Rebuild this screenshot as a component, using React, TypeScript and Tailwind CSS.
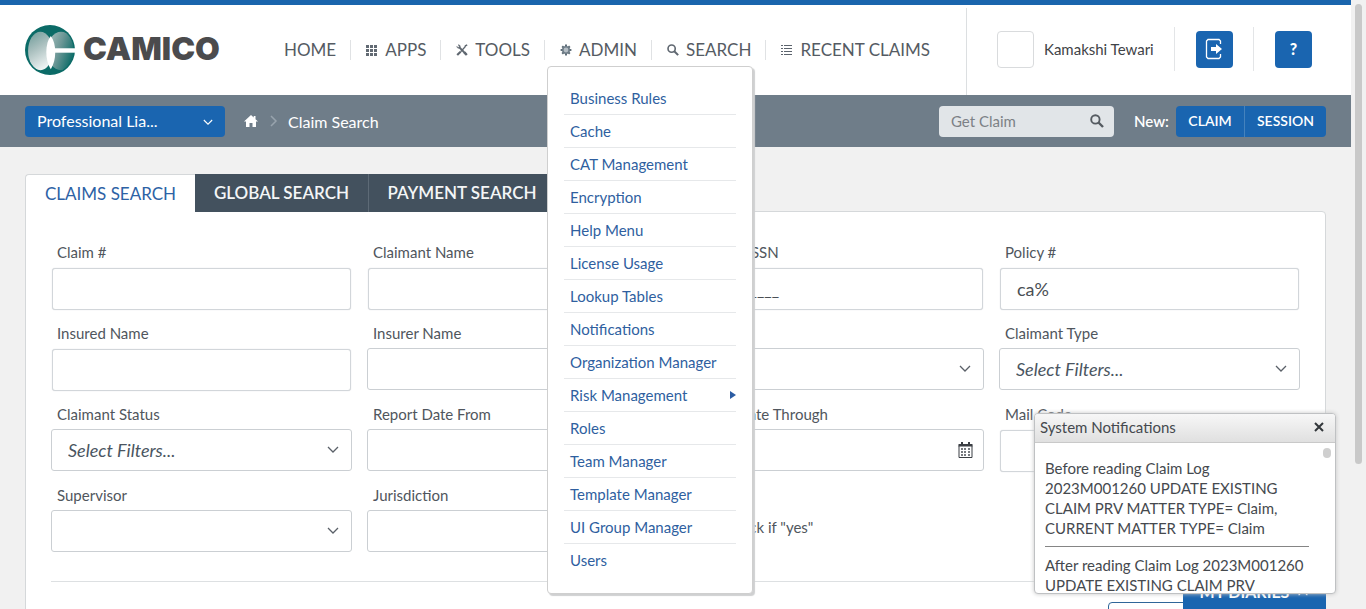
import React, { useId, useState } from "react";

const lato = "font-['Lato','Noto_Sans',sans-serif]";

/* ---------- icons ---------- */

function LogoMark() {
  return (
    <svg viewBox="0 0 52 52" className="h-[50px] w-[50px] shrink-0" aria-hidden="true">
      <defs>
        <linearGradient id="lensLeft" x1="0.1" y1="0" x2="0.5" y2="1">
          <stop offset="0" stopColor="#6f9c9a" />
          <stop offset="0.45" stopColor="#a9bfbe" />
          <stop offset="1" stopColor="#eef3f3" />
        </linearGradient>
        <linearGradient id="lensRight" x1="0.1" y1="0" x2="1" y2="0.4">
          <stop offset="0" stopColor="#a4bdbc" />
          <stop offset="0.5" stopColor="#6c9796" />
          <stop offset="1" stopColor="#15706c" />
        </linearGradient>
        <clipPath id="disc">
          <circle cx="26" cy="26" r="24.500" />
        </clipPath>
      </defs>
      <circle cx="26" cy="26" r="26" fill="#0b6b67" />
      <g clipPath="url(#disc)">
        <ellipse cx="37.500" cy="27" rx="14.500" ry="20" fill="url(#lensRight)" />
        <ellipse cx="16" cy="27" rx="12.800" ry="20" fill="url(#lensLeft)" />
      </g>
      <path d="M26.800 11.500C33 19 33 37 26.800 46C20.600 37 20.600 19 26.800 11.500Z" fill="#fff" />
      <path d="M29 24.200H52V28.800H29Z" fill="#fff" />
    </svg>
  );
}

function GridIcon() {
  return (
    <svg viewBox="0 0 12 12" className="h-3 w-3 fill-[#626a73]" aria-hidden="true">
      <path d="M0 1h3v3H0zM4 1h3v3H4zM8 1h3v3H8zM0 5h3v3H0zM4 5h3v3H4zM8 5h3v3H8zM0 9h3v3H0zM4 9h3v3H4zM8 9h3v3H8z" />
    </svg>
  );
}

function ToolsIcon() {
  return (
    <svg viewBox="0 0 12 12" className="h-3 w-3" fill="none" stroke="#5f6770" aria-hidden="true">
      <path d="M3 3l6.800 7" strokeWidth="1.800" />
      <path d="M.8 2.200l1.200 1.200h1.200V2L2 .9c1.300-.4 2.600.7 2.300 2L3.200 4.300C2 4.600.7 3.600.8 2.200z" fill="#656d76" strokeWidth=".4" />
      <path d="M1.200 11l3.400-3.200" strokeWidth="2.200" />
      <path d="M4.600 7.800L9 3l.4-1.200L11.200.8" strokeWidth="1.400" />
      <path d="M8.400 8.400l2.400 2.600" strokeWidth="2.400" />
    </svg>
  );
}

function GearIcon() {
  return (
    <svg viewBox="0 0 12 12" className="h-3 w-3" aria-hidden="true">
      <g stroke="#5f6d78" strokeWidth="2">
        <path d="M6 .6v10.800M.6 6h10.800M2.200 2.200l7.600 7.600M9.800 2.200L2.200 9.800" />
      </g>
      <circle cx="6" cy="6" r="3.200" fill="#b4bdc4" stroke="#6f7d88" strokeWidth="1.600" />
    </svg>
  );
}

function SearchIcon({ className }: { className: string }) {
  return (
    <svg viewBox="0 0 14 14" className={className} fill="none" stroke="currentColor" aria-hidden="true">
      <circle cx="5.400" cy="5.400" r="4.200" strokeWidth="1.900" />
      <path d="M8.500 8.500l4.500 4.500" strokeWidth="2.400" />
    </svg>
  );
}

function ListIcon() {
  return (
    <svg viewBox="0 0 12 12" className="h-3 w-3 fill-[#5c646d]" aria-hidden="true">
      <path d="M0 1h2v1H0zM3 1h8v1H3zM0 4h2v1H0zM3 4h8v1H3zM0 7h2v1H0zM3 7h8v1H3zM0 10h2v1H0zM3 10h8v1H3z" />
    </svg>
  );
}

function ExitIcon() {
  return (
    <svg viewBox="0 0 18 22" className="h-[22px] w-[18px]" fill="none" stroke="#fff" aria-hidden="true">
      <path d="M15.500 6V3L14 1.500H3L1.500 3V19L3 20.500H14L15.500 19V16" strokeWidth="1.300" />
      <path d="M6 9h5V6l6 5-6 5v-3H6z" fill="#fff" stroke="none" />
    </svg>
  );
}

function HomeIcon() {
  return (
    <svg viewBox="0 0 14 12" className="h-3 w-[14px] fill-white" aria-hidden="true">
      <path d="M7 0L0 6.600h2V12h3.500V8h3v4H12V6.600h2L11.500 4.300V1H9.700v1.600z" />
    </svg>
  );
}

function Chevron({ className }: { className: string }) {
  return (
    <svg viewBox="0 0 12 8" className={className} fill="none" stroke="currentColor" strokeWidth="1.300" aria-hidden="true">
      <path d="M1 1l5 5 5-5" />
    </svg>
  );
}

function CalendarIcon() {
  return (
    <svg viewBox="0 0 15 16" className="h-4 w-[15px]" aria-hidden="true">
      <path d="M1 3.500h13V15.500H1z" fill="none" stroke="#3b3f44" />
      <path d="M.5 2h14v2.500H.5z" fill="#3b3f44" />
      <path d="M3 0h2v3H3zM10 0h2v3h-2z" fill="#3b3f44" />
      <path d="M3 6h2v2H3zM6 6h2v2H6zM10 6h2v2h-2zM3 9h2v2H3zM6 9h2v2H6zM10 9h2v2h-2zM3 12h2v2H3zM6 12h2v2H6zM10 12h2v2h-2z" fill="#777b80" />
    </svg>
  );
}

/* ---------- form fields ---------- */

const labelClass = "block h-5 pl-[6px] text-[15px] leading-[18px] text-[#50565d]";

function TextField({ label, value = "", size = "text-lg" }: { label: string; value?: string; size?: string }) {
  const id = useId();
  const [text, setText] = useState(value);
  return (
    <div>
      <label htmlFor={id} className={labelClass}>{label}</label>
      <div className="px-px pt-[5px]">
        <input
          id={id}
          value={text}
          onChange={(e) => setText(e.target.value)}
          className={`${size} block h-[42px] w-full rounded-[3px] border border-[#d2d6da] bg-white px-4 text-[#4a4f55] shadow-[0_0_1px_#c8ccd0] outline-none`}
        />
      </div>
    </div>
  );
}

function SelectField({ label, placeholder = "" }: { label: string; placeholder?: string }) {
  const id = useId();
  return (
    <div>
      <label htmlFor={id} className={labelClass}>{label}</label>
      <div className="relative mt-1">
        <select
          id={id}
          className="block h-[42px] w-full appearance-none rounded-[3px] border border-[#cbcfd3] bg-white px-4 text-lg text-[#4a5561] italic outline-none"
        >
          <option>{placeholder}</option>
        </select>
        <Chevron className="pointer-events-none absolute top-[17px] right-[13px] h-2 w-3 text-[#5a6068]" />
      </div>
    </div>
  );
}

function DateField({ label }: { label: string }) {
  const id = useId();
  return (
    <div>
      <label htmlFor={id} className={labelClass}>{label}</label>
      <div className="mt-1 flex h-[42px] items-center rounded-[3px] border border-[#cbcfd3] bg-white pr-[10px]">
        <input id={id} className="h-full min-w-0 flex-1 px-4 text-lg text-[#4a4f55] outline-none" />
        <button type="button" aria-label={`Pick a date: ${label}`}><CalendarIcon /></button>
      </div>
    </div>
  );
}

/* ---------- header ---------- */

const adminItems = [
  "Business Rules", "Cache", "CAT Management", "Encryption", "Help Menu",
  "License Usage", "Lookup Tables", "Notifications", "Organization Manager",
  "Risk Management", "Roles", "Team Manager", "Template Manager",
  "UI Group Manager", "Users",
];

function AdminMenu() {
  return (
    <ul className="absolute top-[26px] left-[2px] z-20 w-[206px] rounded-[4px] border border-[#cfcfcf] bg-white px-4 pt-[15px] pb-[17px] shadow-[2px_2px_1px_#cfd0d1]">
      {adminItems.map((item) => (
        <li key={item} className="border-b border-[#e6e8ea] last:border-b-0">
          <a href="#" className="flex h-8 items-center justify-between pl-[6px] text-[15px] whitespace-nowrap text-[#2f5f9f]">
            {item}
            {item === "Risk Management" && (
              <svg viewBox="0 0 6 8" className="h-2 w-[6px] fill-[#2b5ca3]" aria-hidden="true"><path d="M0 0l6 4-6 4z" /></svg>
            )}
          </a>
        </li>
      ))}
    </ul>
  );
}

function NavItem({ icon, label, children }: { icon?: React.ReactNode; label: string; children?: React.ReactNode }) {
  return (
    <li className="relative border-r border-[#e0e2e4] pr-[14px] pl-[15px] last:border-r-0">
      <a href="#" className="flex h-5 items-center gap-[7px] text-[17px] whitespace-nowrap text-[#555b63]">
        {icon}
        {label}
      </a>
      {children}
    </li>
  );
}

function Header() {
  return (
    <header className="flex h-[95px] border-t-5 border-[#1a65ad] bg-white">
      <div className="flex min-w-0 flex-1 items-center pl-[25px]">
        <a href="#" className="flex w-[244px] items-center gap-2 pb-px">
          <LogoMark />
          <span className="pb-[2px] font-['Inter',sans-serif] text-[32px] leading-8 font-black text-[#4b4b4d]">CAMICO</span>
        </a>
        <nav>
          <ul className="flex items-center">
            <NavItem label="HOME" />
            <NavItem icon={<GridIcon />} label="APPS" />
            <NavItem icon={<ToolsIcon />} label="TOOLS" />
            <NavItem icon={<GearIcon />} label="ADMIN"><AdminMenu /></NavItem>
            <NavItem icon={<SearchIcon className="h-3 w-3 text-[#5f6770]" />} label="SEARCH" />
            <NavItem icon={<ListIcon />} label="RECENT CLAIMS" />
          </ul>
        </nav>
      </div>
      <div className="mt-[3px] flex w-[385px] shrink-0 items-center justify-between border-l border-[#dcdfe1] pr-[39px] pb-[5px] pl-[30px]">
        <div className="flex items-center gap-[10px]">
          <span className="h-[37px] w-[37px] rounded-[4px] border border-[#d9dbdd]" />
          <span className="text-[15px] text-[#3f4347]">Kamakshi Tewari</span>
        </div>
        <span className="h-11 w-px bg-[#e3e5e7]" />
        <button aria-label="Log out" className="flex h-[37px] w-[37px] items-center justify-center rounded-[4px] bg-[#1a65b0]"><ExitIcon /></button>
        <span className="h-11 w-px bg-[#e3e5e7]" />
        <button className="h-[37px] w-[37px] rounded-[4px] bg-[#1a65b0] text-base font-black text-white">?</button>
      </div>
    </header>
  );
}

function SubHeader() {
  return (
    <div className="flex h-[52px] items-center bg-[#6f7d89] px-[25px] text-base text-white">
      <div className="relative">
        <select aria-label="Program" className="h-[31px] w-[200px] appearance-none rounded-[4px] bg-[#1a65b0] pl-3 text-base text-white outline-none">
          <option>Professional Lia...</option>
        </select>
        <Chevron className="pointer-events-none absolute top-[13px] right-3 h-[7px] w-[10px]" />
      </div>
      <a href="#" aria-label="Home" className="ml-[19px]"><HomeIcon /></a>
      <svg viewBox="0 0 8 12" className="ml-3 h-3 w-2" fill="none" stroke="#98a3ad" strokeWidth="1.500" aria-hidden="true"><path d="M1 1l5 5-5 5" /></svg>
      <span className="ml-[10px] flex-1 pt-[2px]">Claim Search</span>
      <div className="flex h-[31px] w-[175px] items-center rounded-[4px] bg-[#e1e5e8] pr-[10px] pl-3">
        <input aria-label="Get Claim" placeholder="Get Claim" className="min-w-0 flex-1 text-[15px] outline-none placeholder:text-[#7c8186]" />
        <button aria-label="Find claim"><SearchIcon className="h-[14px] w-[14px] text-[#555b61]" /></button>
      </div>
      <span className="ml-5 w-[42px] text-[15px] font-semibold">New:</span>
      <div className="flex h-[31px] divide-x divide-[#4582bd] overflow-hidden rounded-[4px] bg-[#1a65b0] text-sm font-semibold">
        <button className="w-[69px]">CLAIM</button>
        <button className="w-[81px]">SESSION</button>
      </div>
    </div>
  );
}

/* ---------- search form ---------- */

function SearchPanel() {
  const checkId = useId();
  return (
    <main className="px-[25px] pt-[27px]">
      <div role="tablist" className="relative z-10 flex h-[38px] text-[17px]">
        <button role="tab" aria-selected="true" className="w-[170px] rounded-tl-[4px] border-t border-l border-[#d5d8da] bg-white text-[#2d62a5]">CLAIMS SEARCH</button>
        <button role="tab" aria-selected="false" className="w-[174px] border-r border-[#5d6a76] bg-[#43515e] font-semibold text-[#f4f6f7]">GLOBAL SEARCH</button>
        <button role="tab" aria-selected="false" className="w-[186px] bg-[#43515e] font-semibold text-[#f4f6f7]">PAYMENT SEARCH</button>
      </div>
      <form className="-mt-px rounded-tr-[4px] border border-[#d5d8da] bg-white px-[25px] pt-[31px] pb-10" onSubmit={(e) => e.preventDefault()}>
        <div className="grid auto-rows-[66px] grid-cols-4 gap-x-[15px] gap-y-[15px] border-b border-[#dde0e2] pb-[29px]">
          <TextField label="Claim #" />
          <TextField label="Claimant Name" />
          <TextField label="Claimant SSN" value="___-__-____" size="text-base" />
          <TextField label="Policy #" value="ca%" />
          <TextField label="Insured Name" />
          <SelectField label="Insurer Name" />
          <SelectField label="Status" />
          <SelectField label="Claimant Type" placeholder="Select Filters..." />
          <SelectField label="Claimant Status" placeholder="Select Filters..." />
          <DateField label="Report Date From" />
          <DateField label="Report Date Through" />
          <TextField label="Mail Code" />
          <SelectField label="Supervisor" />
          <SelectField label="Jurisdiction" />
          <div className="flex items-center gap-2 pt-4 pl-[19px] text-[15px] text-[#50565d]">
            <input id={checkId} type="checkbox" />
            <label htmlFor={checkId}>Check if &quot;yes&quot;</label>
          </div>
        </div>
        <div className="mt-5 flex justify-end gap-3">
          <button className="h-10 w-[90px] rounded-[4px] border border-[#2f6699] bg-white" aria-label="Clear" />
          <button className="h-10 w-[90px] rounded-[4px] bg-[#1a65b0]" aria-label="Search" />
        </div>
      </form>
    </main>
  );
}

function Notifications() {
  return (
    <section className="absolute right-[30px] bottom-[15px] z-30 flex h-[181px] w-[302px] flex-col overflow-hidden rounded-[4px] border border-[#bfc1c3] bg-white text-[15px] leading-5 text-[#45494e] shadow-[0_0_4px_#c4c4c4]">
      <header className="flex h-[29px] shrink-0 items-center justify-between border-b border-[#c9c9c9] bg-linear-to-b from-[#f7f7f7] to-[#e0e0e0] pr-[11px] pb-[2px] pl-[5px]">
        <h2>System Notifications</h2>
        <button aria-label="Close">
          <svg viewBox="0 0 10 10" className="h-[10px] w-[10px]" stroke="#33373b" strokeWidth="2" aria-hidden="true"><path d="M1 1l8 8M9 1L1 9" /></svg>
        </button>
      </header>
      <div className="flex min-h-0 flex-1 pt-[15px] pl-[10px]">
        <div className="w-[264px]">
          <p className="w-[240px]">Before reading Claim Log 2023M001260 UPDATE EXISTING CLAIM PRV MATTER TYPE= Claim, CURRENT MATTER TYPE= Claim</p>
          <hr className="mt-2 mb-2 border-[#858585]" />
          <p>After reading Claim Log 2023M001260 UPDATE EXISTING CLAIM PRV</p>
        </div>
        <span className="-mt-[10px] ml-[14px] h-[10px] w-2 rounded-full bg-[#cfcfcf]" />
      </div>
    </section>
  );
}

export default function App() {
  return (
    <div className={`${lato} relative flex h-screen overflow-hidden bg-[#f1f1f1]`}>
      <div className="min-w-0 flex-1">
        <Header />
        <SubHeader />
        <SearchPanel />
      </div>
      <div className="flex w-[15px] shrink-0 justify-center pt-1">
        <div className="h-[460px] w-[7px] rounded-full bg-[#c9c9c9]" />
      </div>
      <button className="absolute right-10 bottom-0 z-20 flex h-[34px] w-[143px] items-center justify-center gap-2 bg-[#1a65b0] text-base font-bold text-white">
        MY DIARIES
        <Chevron className="h-[7px] w-3 rotate-180" />
      </button>
      <Notifications />
    </div>
  );
}
